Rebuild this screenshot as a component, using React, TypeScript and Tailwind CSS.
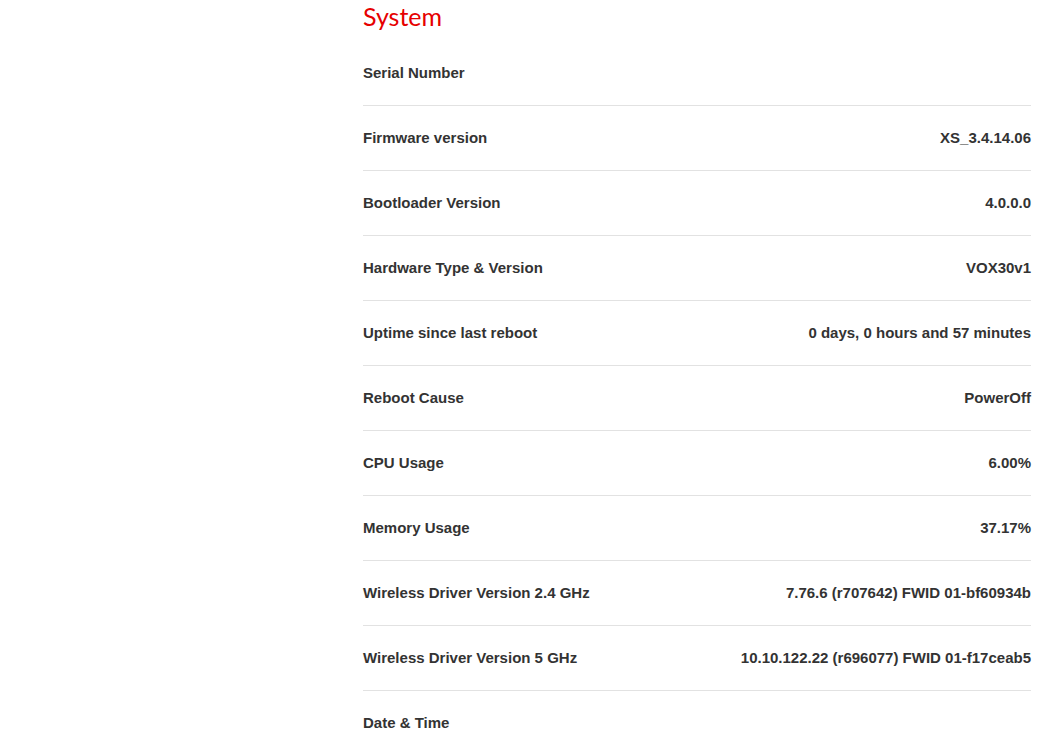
const rows: [string, string][] = [
  ['Serial Number', ''],
  ['Firmware version', 'XS_3.4.14.06'],
  ['Bootloader Version', '4.0.0.0'],
  ['Hardware Type & Version', 'VOX30v1'],
  ['Uptime since last reboot', '0 days, 0 hours and 57 minutes'],
  ['Reboot Cause', 'PowerOff'],
  ['CPU Usage', '6.00%'],
  ['Memory Usage', '37.17%'],
  ['Wireless Driver Version 2.4 GHz', '7.76.6 (r707642) FWID 01-bf60934b'],
  ['Wireless Driver Version 5 GHz', '10.10.122.22 (r696077) FWID 01-f17ceab5'],
  ['Date & Time', ''],
]

export default function App() {
  return (
    <div className="w-[1062px] h-[735px] overflow-hidden bg-white pl-[363px] pr-[31px]">
      <h1 className="h-[41px] pt-[1px] text-[25px] leading-[30px] text-[#e60000] font-[Lato,sans-serif]">System</h1>
      <div className="font-[Liberation_Sans,Arial,sans-serif]">
        {rows.map(([k, v]) => (
          <div
            key={k}
            className="h-[65px] flex items-center justify-between border-b border-[#e2e2e2] text-[15px] font-bold text-[#333]"
          >
            <span>{k}</span>
            <span>{v}</span>
          </div>
        ))}
      </div>
    </div>
  )
}
